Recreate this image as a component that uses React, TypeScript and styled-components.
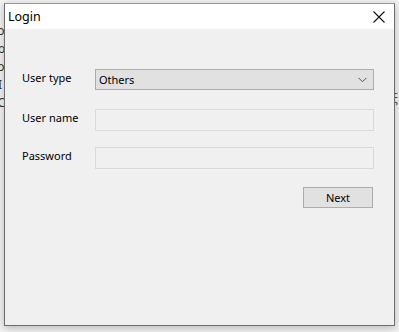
import * as React from 'react'
import styled, { createGlobalStyle } from 'styled-components'

const GlobalStyle = createGlobalStyle`
  html, body {
    margin: 0;
    padding: 0;
    background: #f4f4f4;
  }
  body {
    font-family: "Noto Sans", "Liberation Sans", sans-serif;
    font-size: 11px;
    color: #000;
  }
`

const Desktop = styled.div`
  position: relative;
  width: 399px;
  height: 332px;
  overflow: hidden;
  background: #f3f3f3;
`

const BackdropText = styled.div`
  position: absolute;
  left: -6px;
  top: 24px;
  display: flex;
  flex-direction: column;
  gap: 5px;
  font-size: 12px;
  line-height: 13px;
  color: #333;
`

const BackdropRight = styled.div`
  position: absolute;
  left: 392px;
  top: 90px;
  font-size: 12px;
  color: #555;
`

const Window = styled.div`
  position: absolute;
  left: 4px;
  top: 3px;
  width: 389px;
  height: 321px;
  display: flex;
  flex-direction: column;
  border: 1px solid #6d6d6d;
  border-top-color: #9a9a9a;
  background: #f0f0f0;
  box-shadow: 0 2px 8px rgba(0, 0, 0, 0.25);
`

const TitleBar = styled.div`
  height: 25px;
  flex: none;
  display: flex;
  align-items: center;
  justify-content: space-between;
  padding: 0 8px 0 3px;
  background: #fff;
`

const Title = styled.span`
  font-size: 12.5px;
  line-height: 16px;
  margin-top: 1px;
`

const CloseButton = styled.div`
  width: 14px;
  height: 14px;
  display: flex;
  align-items: center;
  justify-content: center;
  margin-top: 1px;
`

const Body = styled.div`
  flex: 1;
  display: grid;
  grid-template-columns: 73px 279px;
  align-content: start;
  padding: 40px 0 0 17px;
`

const Label = styled.div`
  font-size: 11px;
  line-height: 16px;
  padding-top: 1px;
`

const Field = styled.div<{ $mb: number }>`
  margin-bottom: ${({ $mb }) => $mb}px;
`

const Select = styled.div`
  height: 19px;
  display: flex;
  align-items: center;
  justify-content: space-between;
  padding: 0 6px 0 3px;
  border: 1px solid #adadad;
  background: #e1e1e1;
  font-size: 11px;
`

const Input = styled.div`
  height: 20px;
  border: 1px solid #d9d9d9;
  background: #f0f0f0;
`

const Actions = styled.div`
  grid-column: 2;
  display: flex;
  justify-content: flex-end;
  padding-right: 1px;
`

const Button = styled.div`
  width: 68px;
  height: 19px;
  display: flex;
  align-items: center;
  justify-content: center;
  border: 1px solid #adadad;
  background: #e1e1e1;
  font-size: 11px;
`

export default function App() {
  return (
    <>
      <GlobalStyle />
      <Desktop>
        <BackdropText>
          <span>Jo</span>
          <span>Io</span>
          <span>Jol</span>
          <span>II</span>
          <span>(C</span>
        </BackdropText>
        <BackdropRight>ξ</BackdropRight>
        <Window>
          <TitleBar>
            <Title>Login</Title>
            <CloseButton>
              <svg width="12" height="12" viewBox="0 0 12 12">
                <path d="M0.5 0.5 L11.5 11.5 M11.5 0.5 L0.5 11.5" stroke="#111" strokeWidth="1.1" fill="none" />
              </svg>
            </CloseButton>
          </TitleBar>
          <Body>
            <Label>User type</Label>
            <Field $mb={19}>
              <Select>
                <span>Others</span>
                <svg width="9" height="6" viewBox="0 0 9 6">
                  <path d="M0.5 0.8 L4.5 4.8 L8.5 0.8" stroke="#555" strokeWidth="1" fill="none" />
                </svg>
              </Select>
            </Field>
            <Label>User name</Label>
            <Field $mb={16}>
              <Input />
            </Field>
            <Label>Password</Label>
            <Field $mb={18}>
              <Input />
            </Field>
            <Actions>
              <Button>Next</Button>
            </Actions>
          </Body>
        </Window>
      </Desktop>
    </>
  )
}
